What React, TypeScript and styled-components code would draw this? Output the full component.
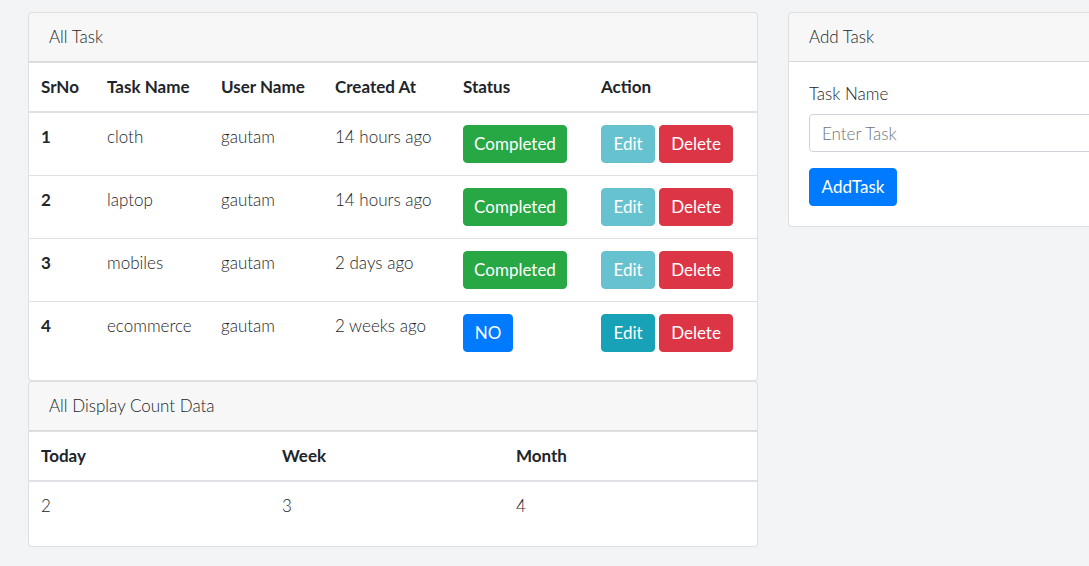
import React from "react";
import styled, { createGlobalStyle } from "styled-components";

const GlobalStyle = createGlobalStyle`
  *, *::before, *::after { box-sizing: border-box; }
  body {
    margin: 0;
    background: #f3f4f6;
    color: #212529;
    font-family: Lato, "Open Sans", sans-serif;
    font-size: 17px;
    font-weight: 300;
    line-height: 24px;
    overflow-x: hidden;
  }
`;

const Page = styled.main`
  display: grid;
  grid-template-columns: minmax(730px, 2fr) minmax(350px, 1fr);
  align-items: start;
  gap: 30px;
  max-width: 1138px;
  padding: 12px 0 19px 28px;
`;

const Card = styled.section`
  background: #fff;
  background-clip: border-box;
  border: 1px solid rgba(0, 0, 0, 0.125);
  border-radius: 4px;
`;

const CardHeader = styled.header`
  padding: 12px 20px;
  background: rgba(0, 0, 0, 0.03);
  border-bottom: 1px solid rgba(0, 0, 0, 0.125);
  border-radius: 3px 3px 0 0;
`;

const CardBody = styled.form`
  padding: 20px;
`;

const Table = styled.table`
  width: 100%;
  margin-bottom: 16px;
  table-layout: fixed;
  border-collapse: collapse;

  th,
  td {
    padding: 12px;
    text-align: left;
    vertical-align: top;
    border-top: 1px solid #dee2e6;
    white-space: nowrap;
  }

  th {
    font-weight: 700;
  }

  thead th {
    border-bottom: 2px solid #dee2e6;
  }
`;

const Column = styled.col<{ $width: number }>`
  width: ${(p) => p.$width}px;
`;

const Actions = styled.div`
  display: flex;
  gap: 4px;
`;

const tones = {
  success: "#28a745",
  primary: "#007bff",
  info: "#17a2b8",
  danger: "#dc3545",
};

const Button = styled.button<{ $tone: keyof typeof tones; $width: number }>`
  display: block;
  min-width: ${(p) => p.$width}px;
  padding: 6px 0;
  border: 1px solid ${(p) => tones[p.$tone]};
  border-radius: 4px;
  background: ${(p) => tones[p.$tone]};
  color: #fff;
  font: inherit;
  font-weight: 400;
  text-align: center;
  cursor: pointer;

  &:disabled {
    opacity: 0.65;
    cursor: default;
  }
`;

const Label = styled.label`
  display: block;
  margin-bottom: 8px;
`;

const Input = styled.input`
  display: block;
  width: 100%;
  height: 38px;
  margin-bottom: 16px;
  padding: 6px 12px;
  border: 1px solid #ced4da;
  border-radius: 4px;
  background: #fff;
  color: #495057;
  font: inherit;

  &::placeholder {
    color: #6c757d;
    opacity: 1;
  }
`;

const tasks = [
  { id: 1, name: "cloth", user: "gautam", created: "14 hours ago", done: true },
  { id: 2, name: "laptop", user: "gautam", created: "14 hours ago", done: true },
  { id: 3, name: "mobiles", user: "gautam", created: "2 days ago", done: true },
  { id: 4, name: "ecommerce", user: "gautam", created: "2 weeks ago", done: false },
];

const taskColumns = [
  { title: "SrNo", width: 66 },
  { title: "Task Name", width: 114 },
  { title: "User Name", width: 114 },
  { title: "Created At", width: 128 },
  { title: "Status", width: 138 },
  { title: "Action", width: 168 },
];

const counts = [
  { title: "Today", width: 241, value: 2 },
  { title: "Week", width: 234, value: 3 },
  { title: "Month", width: 253, value: 4 },
];

function TableHead({ columns }: { columns: { title: string; width: number }[] }) {
  return (
    <>
      <colgroup>
        {columns.map((c) => (
          <Column key={c.title} $width={c.width} />
        ))}
      </colgroup>
      <thead>
        <tr>
          {columns.map((c) => (
            <th key={c.title} scope="col">{c.title}</th>
          ))}
        </tr>
      </thead>
    </>
  );
}

export default function App() {
  return (
    <>
      <GlobalStyle />
      <Page>
        <div>
          <Card>
            <CardHeader>All Task</CardHeader>
            <Table>
              <TableHead columns={taskColumns} />
              <tbody>
                {tasks.map((t) => (
                  <tr key={t.id}>
                    <th scope="row">{t.id}</th>
                    <td>{t.name}</td>
                    <td>{t.user}</td>
                    <td>{t.created}</td>
                    <td>
                      {t.done ? (
                        <Button type="button" $tone="success" $width={104}>Completed</Button>
                      ) : (
                        <Button type="button" $tone="primary" $width={50}>NO</Button>
                      )}
                    </td>
                    <td>
                      <Actions>
                        <Button type="button" $tone="info" $width={54} disabled={t.done}>Edit</Button>
                        <Button type="button" $tone="danger" $width={74}>Delete</Button>
                      </Actions>
                    </td>
                  </tr>
                ))}
              </tbody>
            </Table>
          </Card>
          <Card>
            <CardHeader>All Display Count Data</CardHeader>
            <Table>
              <TableHead columns={counts} />
              <tbody>
                <tr>
                  {counts.map((c) => (
                    <td key={c.title}>{c.value}</td>
                  ))}
                </tr>
              </tbody>
            </Table>
          </Card>
        </div>
        <Card>
          <CardHeader>Add Task</CardHeader>
          <CardBody onSubmit={(e) => e.preventDefault()}>
            <Label htmlFor="task">Task Name</Label>
            <Input id="task" type="text" placeholder="Enter Task" />
            <Button type="submit" $tone="primary" $width={88}>AddTask</Button>
          </CardBody>
        </Card>
      </Page>
    </>
  );
}
